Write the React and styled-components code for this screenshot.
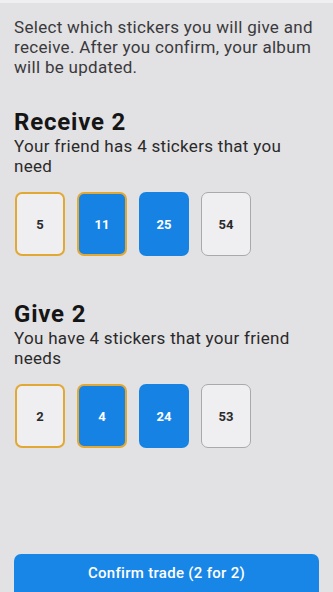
import React from "react";
import styled, { createGlobalStyle } from "styled-components";

const Global = createGlobalStyle`
  html, body { margin: 0; padding: 0; background: #e2e1e4; }
  body { font-family: Roboto, "Noto Sans", Arial, sans-serif; }
  * { box-sizing: border-box; }
`;

const Screen = styled.div`
  width: 333px;
  height: 592px;
  overflow: hidden;
  background: #e2e1e4;
  border-top: 3px solid #efeef1;
  display: flex;
  flex-direction: column;
  padding: 0 14px;
`;

const Intro = styled.p`
  margin: 14px 0 0;
  font-size: 17px;
  line-height: 20px;
  letter-spacing: 0.3px;
  color: #3a3a3c;
`;

const Section = styled.section`
  margin-top: ${(p) => p.$top}px;
`;

const Title = styled.h2`
  margin: 0;
  font-size: 24px;
  font-weight: 700;
  line-height: 28px;
  letter-spacing: 0.8px;
  color: #151515;
`;

const Sub = styled.p`
  margin: 0;
  font-size: 17px;
  line-height: 20px;
  letter-spacing: 0.3px;
  color: #2a2a2a;
`;

const Cards = styled.div`
  display: flex;
  gap: 12px;
  margin-top: 16px;
  padding-left: 1px;
`;

const Card = styled.div`
  width: 50px;
  height: 64px;
  border-radius: 7px;
  display: flex;
  align-items: center;
  justify-content: center;
  font-size: 13px;
  font-weight: 700;
  background: ${(p) => (p.$selected ? "#1683e4" : "#efeef1")};
  color: ${(p) => (p.$selected ? "#ffffff" : "#2a2a2a")};
  border: ${(p) =>
    p.$highlight
      ? "2px solid #e2a834"
      : p.$selected
      ? "2px solid #1683e4"
      : "1.5px solid #a9a8ab"};
`;

const Spacer = styled.div`
  flex: 1;
`;

const Button = styled.button`
  width: 100%;
  height: 48px;
  margin-bottom: -10px;
  border: none;
  border-radius: 7px;
  background: #1886e6;
  color: #ffffff;
  font-family: Roboto, Arial, sans-serif;
  font-size: 15px;
  font-weight: 500;
  letter-spacing: 0.3px;
  padding: 0 0 10px;
  display: flex;
  align-items: center;
  justify-content: center;
`;

const receive = [
  { n: 5, highlight: true, selected: false },
  { n: 11, highlight: true, selected: true },
  { n: 25, highlight: false, selected: true },
  { n: 54, highlight: false, selected: false },
];
const give = [
  { n: 2, highlight: true, selected: false },
  { n: 4, highlight: true, selected: true },
  { n: 24, highlight: false, selected: true },
  { n: 53, highlight: false, selected: false },
];

export default function App() {
  return (
    <>
      <Global />
      <Screen>
        <Intro>
          Select which stickers you will give and receive. After you confirm,
          your album will be updated.
        </Intro>
        <Section $top={31}>
          <Title>Receive 2</Title>
          <Sub>Your friend has 4 stickers that you need</Sub>
          <Cards>
            {receive.map((c) => (
              <Card key={c.n} $highlight={c.highlight} $selected={c.selected}>
                {c.n}
              </Card>
            ))}
          </Cards>
        </Section>
        <Section $top={44}>
          <Title>Give 2</Title>
          <Sub>You have 4 stickers that your friend needs</Sub>
          <Cards>
            {give.map((c) => (
              <Card key={c.n} $highlight={c.highlight} $selected={c.selected}>
                {c.n}
              </Card>
            ))}
          </Cards>
        </Section>
        <Spacer />
        <Button>Confirm trade (2 for 2)</Button>
      </Screen>
    </>
  );
}
